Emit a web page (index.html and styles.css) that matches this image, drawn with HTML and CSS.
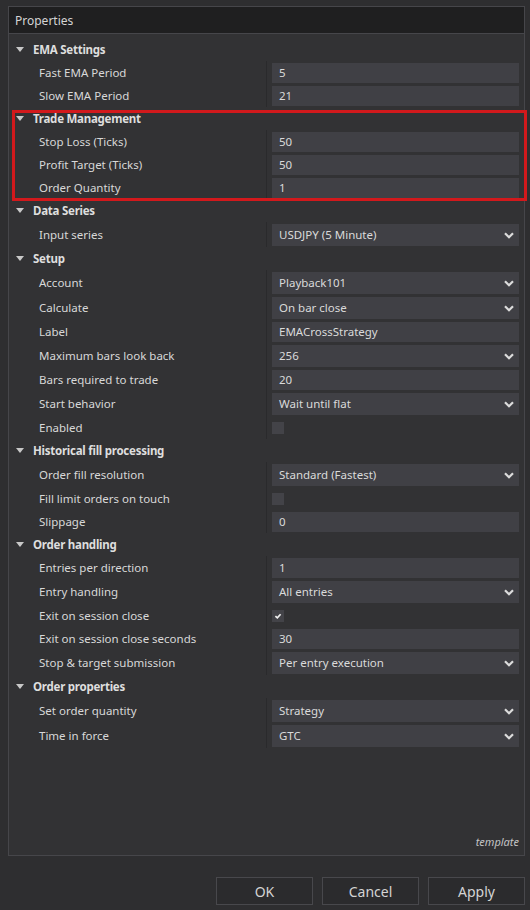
FILE: index.html
```html
<!DOCTYPE html>
<html>
<head>
<meta charset="utf-8">
<title>Properties</title>
<link rel="stylesheet" href="styles.css">
</head>
<body>
<div class="panel">
  <div class="panel-header">Properties</div>
  <div class="props">
    <div class="section"><span class="tri"></span>EMA Settings</div>
    <div class="row"><div class="label">Fast EMA Period</div><div class="value"><div class="box">5</div></div></div>
    <div class="row"><div class="label">Slow EMA Period</div><div class="value"><div class="box">21</div></div></div>

    <div class="group highlight">
      <div class="section"><span class="tri"></span>Trade Management</div>
      <div class="row"><div class="label">Stop Loss (Ticks)</div><div class="value"><div class="box">50</div></div></div>
      <div class="row"><div class="label">Profit Target (Ticks)</div><div class="value"><div class="box">50</div></div></div>
      <div class="row"><div class="label">Order Quantity</div><div class="value"><div class="box">1</div></div></div>
    </div>

    <div class="section"><span class="tri"></span>Data Series</div>
    <div class="row dd"><div class="label">Input series</div><div class="value"><div class="box select">USDJPY (5 Minute)<svg class="chev" viewBox="0 0 10 7"><path d="M1 1.2 L5 5.2 L9 1.2"/></svg></div></div></div>

    <div class="section"><span class="tri"></span>Setup</div>
    <div class="row dd"><div class="label">Account</div><div class="value"><div class="box select">Playback101<svg class="chev" viewBox="0 0 10 7"><path d="M1 1.2 L5 5.2 L9 1.2"/></svg></div></div></div>
    <div class="row dd"><div class="label">Calculate</div><div class="value"><div class="box select">On bar close<svg class="chev" viewBox="0 0 10 7"><path d="M1 1.2 L5 5.2 L9 1.2"/></svg></div></div></div>
    <div class="row"><div class="label">Label</div><div class="value"><div class="box">EMACrossStrategy</div></div></div>
    <div class="row dd"><div class="label">Maximum bars look back</div><div class="value"><div class="box select">256<svg class="chev" viewBox="0 0 10 7"><path d="M1 1.2 L5 5.2 L9 1.2"/></svg></div></div></div>
    <div class="row"><div class="label">Bars required to trade</div><div class="value"><div class="box">20</div></div></div>
    <div class="row dd"><div class="label">Start behavior</div><div class="value"><div class="box select">Wait until flat<svg class="chev" viewBox="0 0 10 7"><path d="M1 1.2 L5 5.2 L9 1.2"/></svg></div></div></div>
    <div class="row"><div class="label">Enabled</div><div class="value"><div class="check"></div></div></div>

    <div class="section"><span class="tri"></span>Historical fill processing</div>
    <div class="row dd"><div class="label">Order fill resolution</div><div class="value"><div class="box select">Standard (Fastest)<svg class="chev" viewBox="0 0 10 7"><path d="M1 1.2 L5 5.2 L9 1.2"/></svg></div></div></div>
    <div class="row"><div class="label">Fill limit orders on touch</div><div class="value"><div class="check"></div></div></div>
    <div class="row"><div class="label">Slippage</div><div class="value"><div class="box">0</div></div></div>

    <div class="section"><span class="tri"></span>Order handling</div>
    <div class="row"><div class="label">Entries per direction</div><div class="value"><div class="box">1</div></div></div>
    <div class="row dd"><div class="label">Entry handling</div><div class="value"><div class="box select">All entries<svg class="chev" viewBox="0 0 10 7"><path d="M1 1.2 L5 5.2 L9 1.2"/></svg></div></div></div>
    <div class="row"><div class="label">Exit on session close</div><div class="value"><div class="check"><svg class="tick" viewBox="0 0 12 12"><path d="M3.4 6.2 L5.3 7.9 L8.6 4.3"/></svg></div></div></div>
    <div class="row"><div class="label">Exit on session close seconds</div><div class="value"><div class="box">30</div></div></div>
    <div class="row dd"><div class="label">Stop &amp; target submission</div><div class="value"><div class="box select">Per entry execution<svg class="chev" viewBox="0 0 10 7"><path d="M1 1.2 L5 5.2 L9 1.2"/></svg></div></div></div>

    <div class="section"><span class="tri"></span>Order properties</div>
    <div class="row dd"><div class="label">Set order quantity</div><div class="value"><div class="box select">Strategy<svg class="chev" viewBox="0 0 10 7"><path d="M1 1.2 L5 5.2 L9 1.2"/></svg></div></div></div>
    <div class="row dd"><div class="label">Time in force</div><div class="value"><div class="box select">GTC<svg class="chev" viewBox="0 0 10 7"><path d="M1 1.2 L5 5.2 L9 1.2"/></svg></div></div></div>
  </div>
  <div class="template">template</div>
</div>
<div class="buttons">
  <button class="btn">OK</button>
  <button class="btn">Cancel</button>
  <button class="btn">Apply</button>
</div>
</body>
</html>
```
FILE: styles.css
```css
html, body {
  margin: 0;
  padding: 0;
}
body {
  background: #2e2e30;
  width: 530px;
  height: 910px;
  overflow: hidden;
  font-family: "Noto Sans", "Open Sans", sans-serif;
  font-size: 11.5px;
  color: #d8d8d8;
}
.panel {
  box-sizing: border-box;
  margin: 6px 0 0 8px;
  width: 517px;
  height: 850px;
  border: 1px solid #46464a;
  background: #323234;
  display: flex;
  flex-direction: column;
}
.panel-header {
  height: 26px;
  background: #1f1f20;
  border-bottom: 1px solid #46464a;
  padding-left: 6px;
  display: flex;
  align-items: center;
  font-size: 12px;
  color: #d4d4d4;
}
.props {
  padding-top: 4px;
  flex: 1;
}
.section {
  height: 23px;
  display: flex;
  align-items: center;
  font-weight: bold;
  letter-spacing: -0.25px;
  color: #dedede;
  padding-left: 7px;
}
.tri {
  width: 0;
  height: 0;
  border-left: 4px solid transparent;
  border-right: 4px solid transparent;
  border-top: 5px solid #c8c8c8;
  margin-right: 9px;
}
.row {
  height: 23px;
  display: flex;
}
.row.dd {
  height: 25px;
}
.label {
  width: 227px;
  padding-left: 30px;
  display: flex;
  align-items: center;
  color: #d8d8d8;
}
.value {
  flex: 1;
  border-left: 1px solid #2a2a2c;
  padding: 0 5px 0 5px;
  display: flex;
  align-items: center;
}
.box {
  flex: 1;
  height: 20px;
  background: #404045;
  padding-left: 7px;
  display: flex;
  align-items: center;
  color: #dadada;
  position: relative;
}
.box.select {
  height: 22px;
}
.chev {
  position: absolute;
  right: 5px;
  top: 8px;
  width: 10px;
  height: 7px;
}
.chev path {
  fill: none;
  stroke: #dcdcdc;
  stroke-width: 2.2;
}
.check {
  width: 12px;
  height: 12px;
  background: #434348;
  position: relative;
}
.tick {
  position: absolute;
  left: 0;
  top: 0;
  width: 12px;
  height: 12px;
}
.tick path {
  fill: none;
  stroke: #f0f0f0;
  stroke-width: 1.7;
}
.group {
  position: relative;
}
.highlight::after {
  content: "";
  position: absolute;
  left: 3px;
  right: -3px;
  top: 3px;
  bottom: -2px;
  border: 3px solid #d2191c;
  pointer-events: none;
}
.template {
  text-align: right;
  font-style: italic;
  font-size: 11px;
  color: #c4c4c4;
  padding: 0 5px 6px 0;
}
.buttons {
  display: flex;
  justify-content: flex-end;
  gap: 9px;
  margin-top: 21px;
  padding-right: 5px;
}
.btn {
  width: 97px;
  height: 28px;
  background: #2b2b2d;
  border: 1px solid #48484c;
  color: #d4d4d4;
  font-family: "Noto Sans", "Open Sans", sans-serif;
  font-size: 14px;
  padding: 0;
}
```
